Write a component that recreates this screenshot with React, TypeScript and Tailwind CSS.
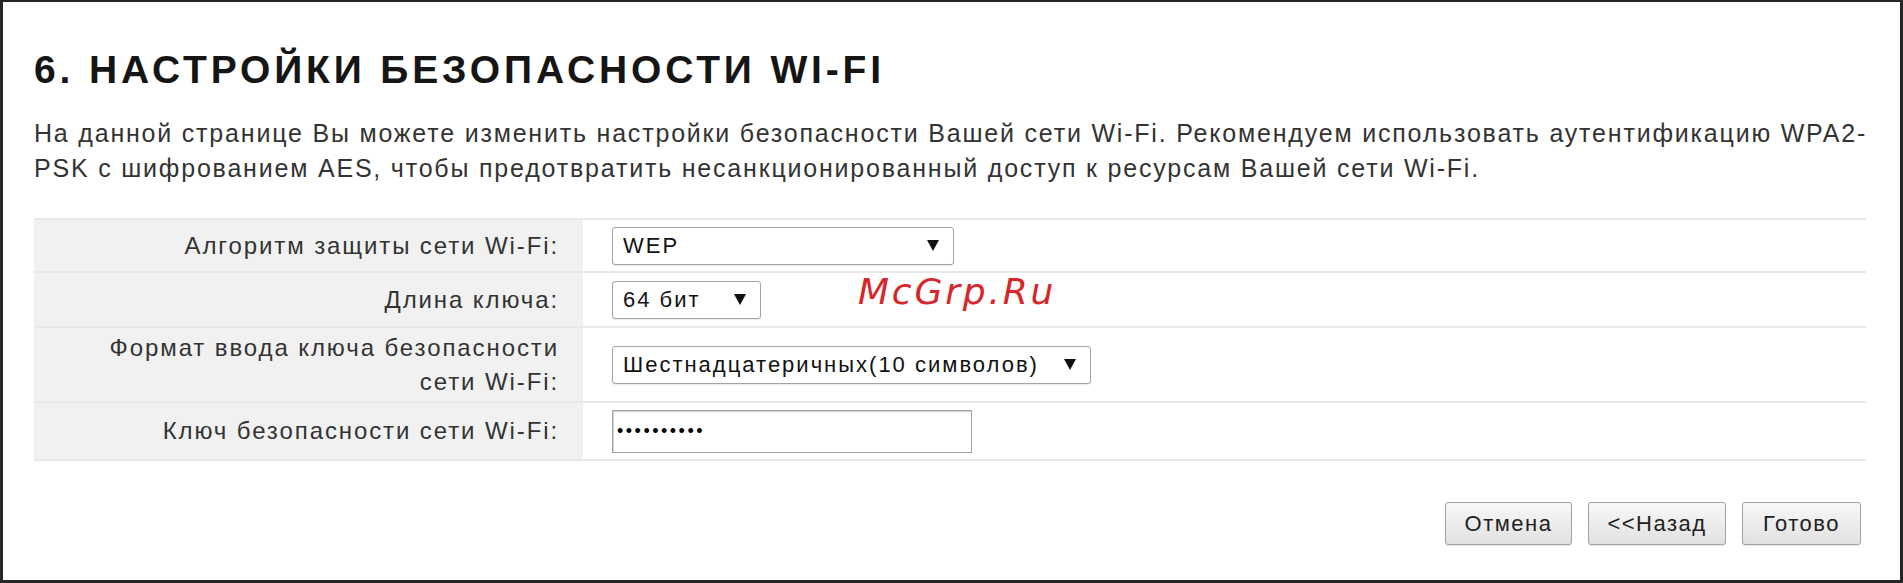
const FONT = "font-['Liberation_Sans',Arial,sans-serif]";

function Arrow() {
  return (
    <svg width="12" height="11" viewBox="0 0 12 11" className="shrink-0">
      <polygon points="0,0 12,0 6,11" fill="#111" />
    </svg>
  );
}

function Select({ value, width }: { value: string; width: string }) {
  return (
    <div
      className={`flex h-[38px] items-center justify-between rounded-[3px] border border-[#a4a4a4] bg-white pl-[10px] pr-[14px] text-[22px] tracking-[2px] text-[#111] shadow-[0_1px_1px_rgba(0,0,0,0.08)] ${width}`}
    >
      <span className="whitespace-nowrap">{value}</span>
      <Arrow />
    </div>
  );
}

function Row({
  label,
  children,
  height,
  first = false,
}: {
  label: React.ReactNode;
  children: React.ReactNode;
  height: string;
  first?: boolean;
}) {
  return (
    <div
      className={`flex border-b-2 border-[#e8e8e8] ${first ? "border-t-2" : ""} ${height}`}
    >
      <div className="flex w-[549px] shrink-0 items-center justify-end bg-[#f1f1f1] pr-[24px] text-right text-[24px] leading-[34px] tracking-[1.9px] text-[#333]">
        {label}
      </div>
      <div className="flex flex-1 items-center pl-[29px]">{children}</div>
    </div>
  );
}

function Button({ children, width }: { children: React.ReactNode; width: string }) {
  return (
    <button
      className={`h-[43px] rounded-[3px] border border-[#a2a2a2] bg-linear-to-b from-[#f8f8f8] to-[#e1e1e1] text-[22px] tracking-[1.5px] text-[#222] shadow-[0_1px_1px_rgba(0,0,0,0.1)] ${width}`}
    >
      {children}
    </button>
  );
}

export default function App() {
  return (
    <div className={`h-[583px] w-[1903px] bg-white ${FONT}`}>
      <div className="relative h-full border-t-[2px] border-r-[3px] border-b-[3px] border-l-[3px] border-[#262626] pl-[31px] pr-[34px]">
        <h1 className="mt-[48px] text-[39px] font-bold leading-[39px] tracking-[3.85px] text-[#151515]">
          6. НАСТРОЙКИ БЕЗОПАСНОСТИ WI-FI
        </h1>

        <p className="mt-[27px] whitespace-nowrap text-[25px] leading-[35px] tracking-[1.8px] text-[#333]">
          На данной странице Вы можете изменить настройки безопасности Вашей сети Wi-Fi. Рекомендуем использовать аутентификацию WPA2-
          <br />
          PSK с шифрованием AES, чтобы предотвратить несанкционированный доступ к ресурсам Вашей сети Wi-Fi.
        </p>

        <div className="mt-[32px]">
          <Row first height="h-[55px]" label="Алгоритм защиты сети Wi-Fi:">
            <Select value="WEP" width="w-[342px]" />
          </Row>
          <Row height="h-[55px]" label="Длина ключа:">
            <Select value="64 бит" width="w-[149px]" />
          </Row>
          <Row
            height="h-[75px]"
            label={
              <span>
                Формат ввода ключа безопасности
                <br />
                сети Wi-Fi:
              </span>
            }
          >
            <Select value="Шестнадцатеричных(10 символов)" width="w-[479px]" />
          </Row>
          <Row height="h-[58px]" label="Ключ безопасности сети Wi-Fi:">
            <div className="flex h-[43px] w-[360px] items-center border border-[#a4a4a4] bg-white pl-[4px] text-[18px] leading-none tracking-[2.5px] text-black shadow-[inset_1px_1px_0_#d0d0d0]">
              ••••••••••
            </div>
          </Row>
        </div>

        <div className="mt-[41px] flex justify-end gap-[16px] pr-[5px]">
          <Button width="w-[127px]">Отмена</Button>
          <Button width="w-[138px]">&lt;&lt;Назад</Button>
          <Button width="w-[119px]">Готово</Button>
        </div>

        <div className="absolute left-[855px] top-[272px] font-['DejaVu_Sans',sans-serif] text-[36px] italic leading-[36px] tracking-[2.8px] text-[#d7262c]">
          McGrp.Ru
        </div>
      </div>
    </div>
  );
}
